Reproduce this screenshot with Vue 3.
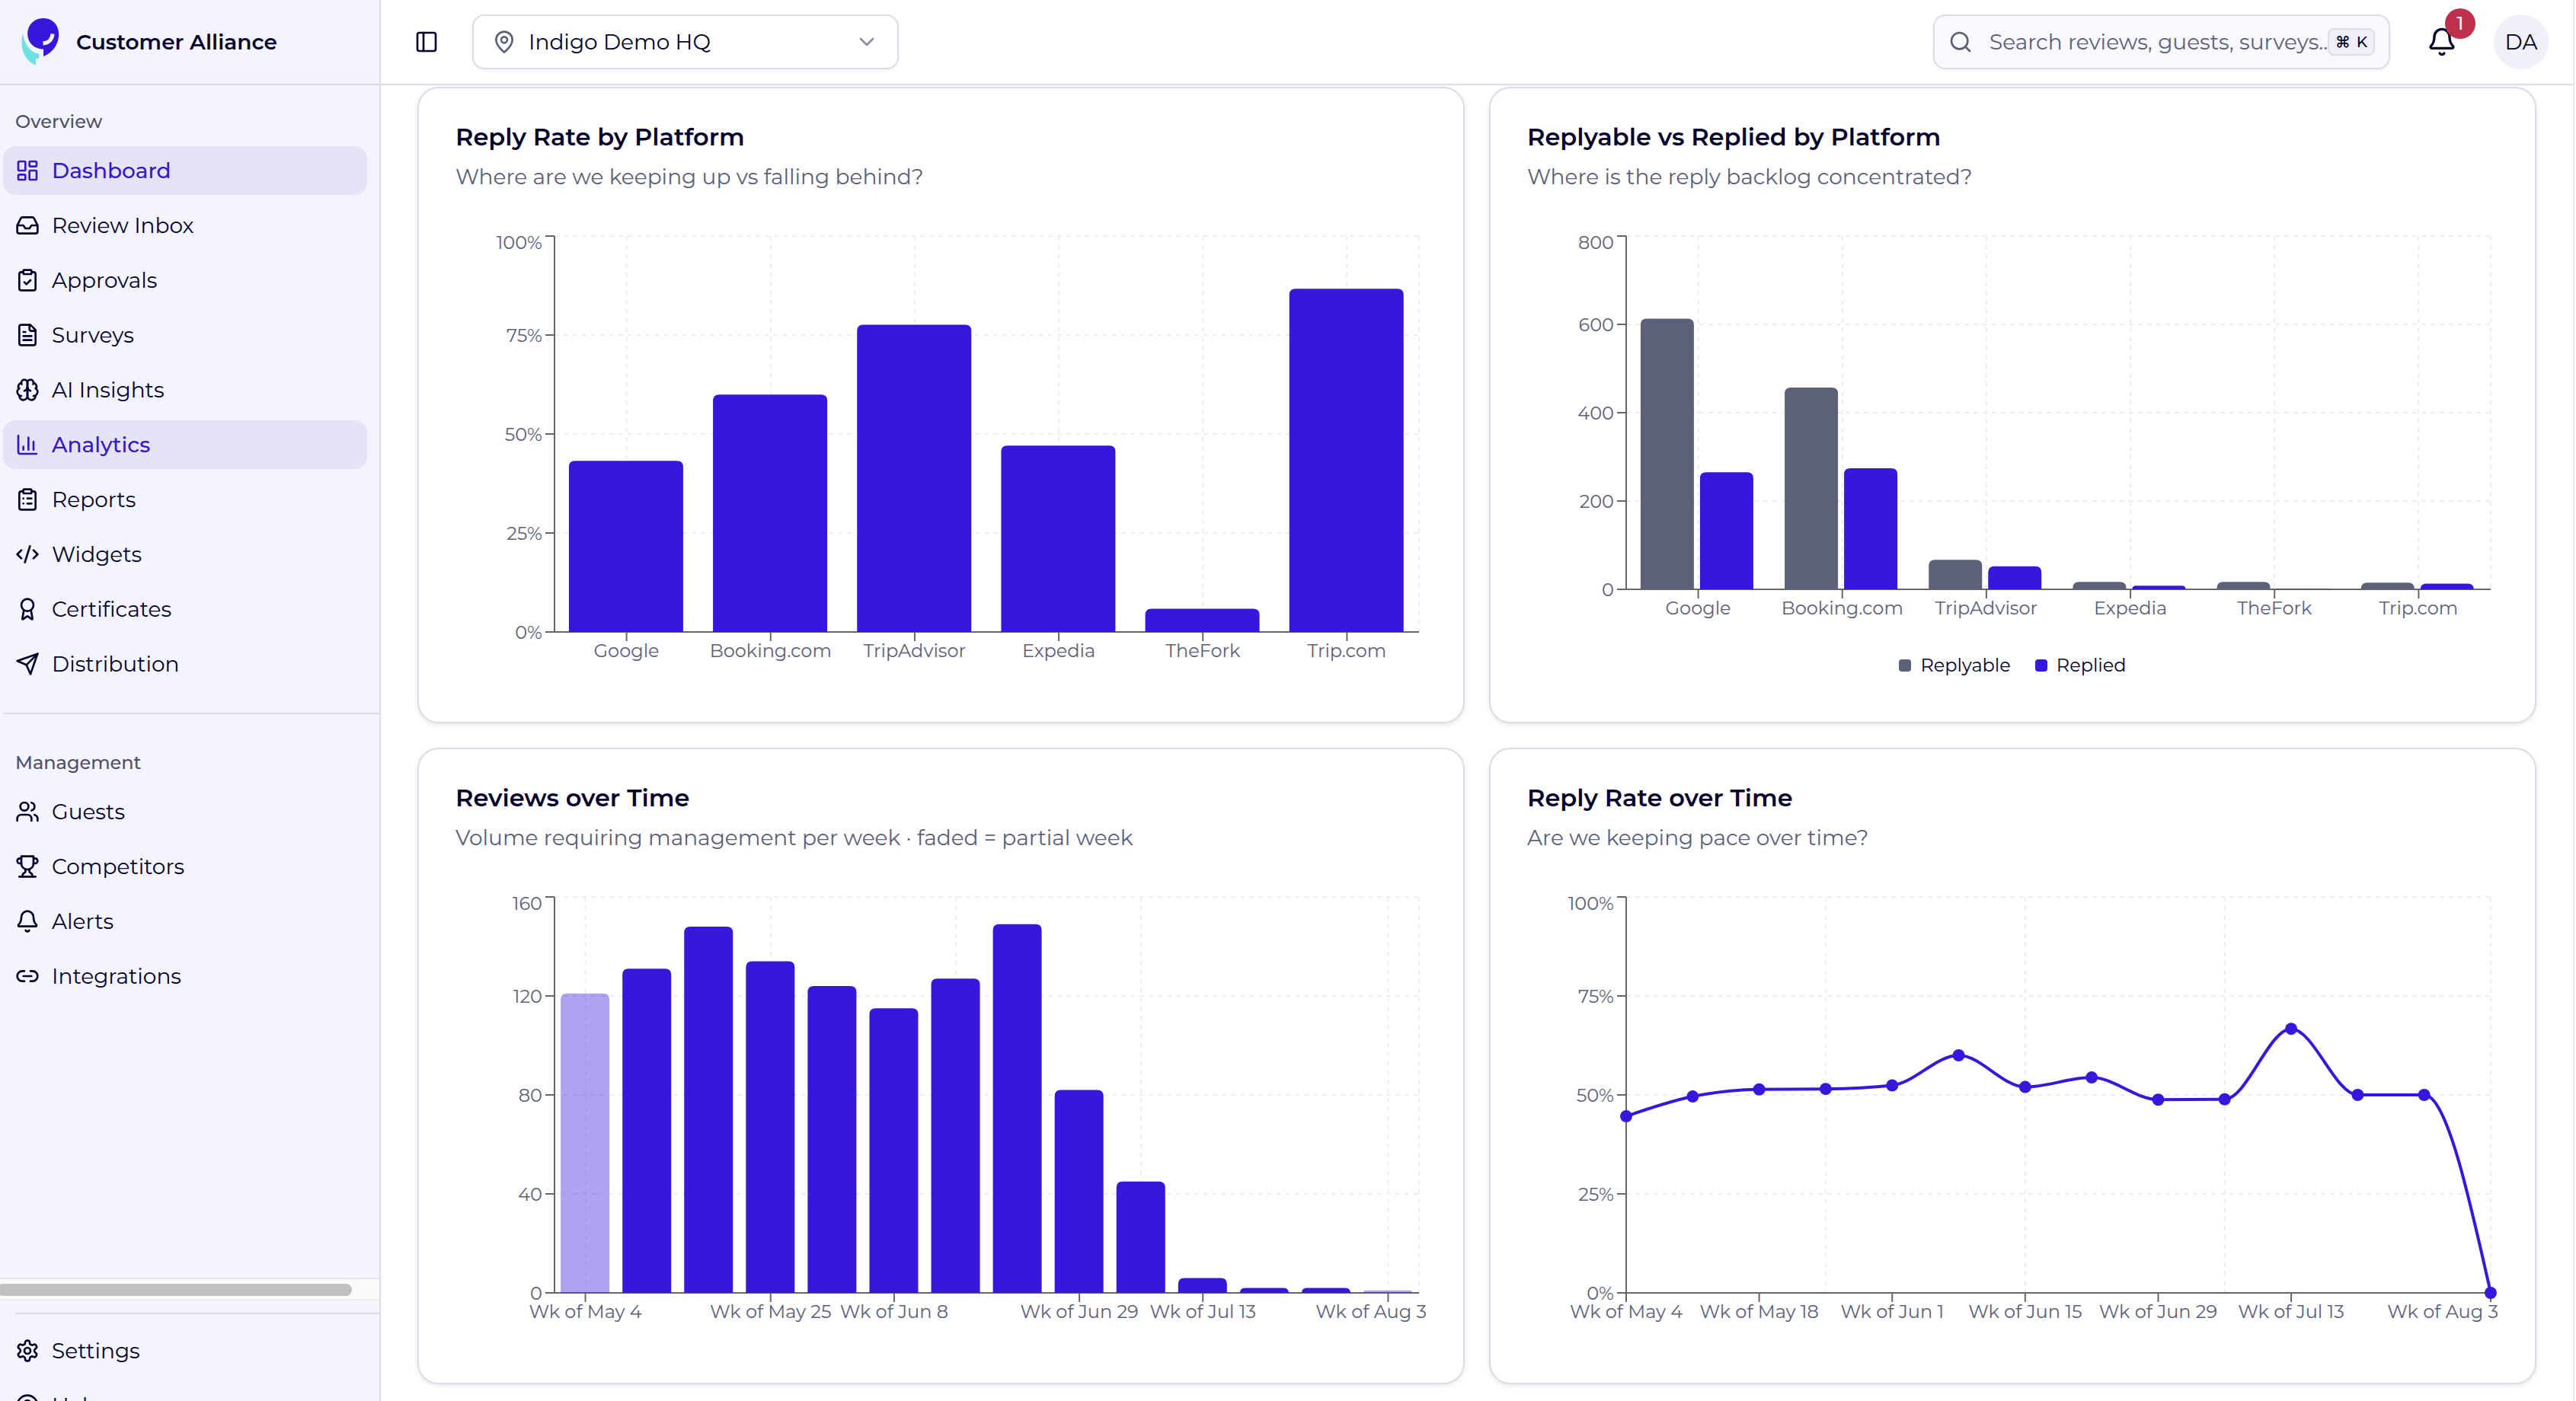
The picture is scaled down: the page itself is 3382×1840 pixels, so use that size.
<template>
    <div class="app">
        <!-- Sidebar -->
        <aside class="sidebar">
            <div class="brand">
                <svg class="brand-logo" viewBox="26 23 52 64" aria-hidden="true">
                    <path d="M30.500 44C25 58 30 79 47 86V77.500C49 77.500 50 76.500 51.500 76V71C41 69 31 58 30.500 44Z" fill="#70e0e0" />
                    <path d="M57 24C68.500 24 77.200 32.500 77.200 45C77.200 58 69 69.500 57 74V64.500C44 64.500 36.200 55 36.200 44.500C36.200 32.500 45 24 57 24Z" fill="#3618dc" />
                    <path d="M69 44.500C68.500 51.500 64 56.500 56.500 57" fill="none" stroke="#f4f4fe" stroke-width="5" />
                </svg>
                <span class="brand-name">Customer Alliance</span>
            </div>

            <nav class="nav">
                <div class="nav-label">Overview</div>
                <a v-for="item in overview" :key="item.label" href="#" class="nav-item" :class="{ active: item.active }">
                    <svg class="icon" viewBox="0 0 24 24" v-html="icons[item.icon]"></svg>
                    <span>{{ item.label }}</span>
                </a>
                <hr class="nav-separator">
                <div class="nav-label">Management</div>
                <a v-for="item in management" :key="item.label" href="#" class="nav-item">
                    <svg class="icon" viewBox="0 0 24 24" v-html="icons[item.icon]"></svg>
                    <span>{{ item.label }}</span>
                </a>
            </nav>

            <div class="scroll-track">
                <div class="scroll-thumb"></div>
            </div>

            <div class="sidebar-footer">
                <hr class="footer-separator">
                <a v-for="item in footer" :key="item.label" href="#" class="nav-item">
                    <svg class="icon" viewBox="0 0 24 24" v-html="icons[item.icon]"></svg>
                    <span>{{ item.label }}</span>
                </a>
            </div>
        </aside>

        <div class="content">
            <!-- Top bar -->
            <header class="topbar">
                <button class="icon-button" type="button" aria-label="Toggle sidebar">
                    <svg class="icon" viewBox="0 0 24 24" v-html="icons.panel"></svg>
                </button>
                <label class="location">
                    <svg class="icon muted" viewBox="0 0 24 24" v-html="icons.pin"></svg>
                    <select v-model="location" aria-label="Location">
                        <option>Indigo Demo HQ</option>
                    </select>
                    <svg class="icon chevron" viewBox="0 0 24 24" v-html="icons.chevron"></svg>
                </label>
                <div class="topbar-spacer"></div>
                <label class="search">
                    <svg class="icon muted" viewBox="0 0 24 24" v-html="icons.search"></svg>
                    <input v-model="query" type="text" placeholder="Search reviews, guests, surveys..." aria-label="Search">
                    <kbd><span>⌘</span><span>K</span></kbd>
                </label>
                <button class="bell" type="button" aria-label="Notifications">
                    <svg class="icon" viewBox="0 0 24 24" v-html="icons.bell"></svg>
                    <span class="badge">1</span>
                </button>
                <button class="avatar" type="button">DA</button>
            </header>

            <!-- Charts -->
            <main class="cards">
                <section v-for="(chart, index) in charts" :key="chart.title" class="card">
                    <h2>{{ chart.title }}</h2>
                    <p>{{ chart.subtitle }}</p>
                    <div :ref="index === 0 ? (el) => (plotEl = el) : undefined" class="plot">
                        <svg class="chart" :width="width" :height="chart.height" role="img" :aria-label="chart.title">
                            <g class="grid">
                                <line v-for="t in chart.yTicks" :key="'h' + t" :x1="LEFT" :x2="right" :y1="yPos(chart, t)" :y2="yPos(chart, t)" />
                                <line v-for="i in chart.gridAt" :key="'v' + i" :x1="xPos(chart, i)" :x2="xPos(chart, i)" :y1="TOP" :y2="bottom(chart)" />
                                <line :x1="right" :x2="right" :y1="TOP" :y2="bottom(chart)" />
                            </g>
                            <g class="axis">
                                <line :x1="LEFT" :x2="right" :y1="bottom(chart)" :y2="bottom(chart)" />
                                <line :x1="LEFT" :x2="LEFT" :y1="TOP" :y2="bottom(chart)" />
                                <line v-for="t in chart.yTicks" :key="'y' + t" :x1="LEFT - 12" :x2="LEFT" :y1="yPos(chart, t)" :y2="yPos(chart, t)" />
                                <line v-for="i in chart.ticksAt" :key="'x' + i" :x1="xPos(chart, i)" :x2="xPos(chart, i)" :y1="bottom(chart)" :y2="bottom(chart) + 12" />
                            </g>
                            <g class="tick-text">
                                <text v-for="t in chart.yTicks" :key="t" :x="LEFT - 16" :y="labelY(chart, t)" text-anchor="end">{{ t }}{{ chart.unit }}</text>
                                <text v-for="i in chart.ticksAt" :key="'l' + i" v-bind="labelX(chart, i)" :y="bottom(chart) + 33">{{ chart.labels[i] }}</text>
                            </g>
                            <template v-if="chart.type === 'bar'">
                                <path v-for="bar in bars(chart)" :key="bar.key" :d="bar.d" :fill="bar.color" :opacity="bar.opacity" />
                            </template>
                            <template v-else>
                                <path :d="linePath(chart)" class="line" />
                                <circle v-for="(p, i) in points(chart)" :key="i" :cx="p[0]" :cy="p[1]" r="8" :fill="BLUE" />
                            </template>
                        </svg>
                        <ul v-if="chart.legend" class="legend">
                            <li v-for="s in chart.series" :key="s.name">
                                <i :style="{ background: s.color }"></i>{{ s.name }}
                            </li>
                        </ul>
                    </div>
                </section>
            </main>
        </div>
        <div class="page-edge"></div>
    </div>
</template>

<script setup>
import { computed, onBeforeUnmount, onMounted, ref } from 'vue'

const BLUE = '#3618dc'
const SLATE = '#5d6079'
const TOP = 10
const LEFT = 130

const location = ref('Indigo Demo HQ')
const query = ref('')

const overview = [
    { label: 'Dashboard', icon: 'dashboard', active: true },
    { label: 'Review Inbox', icon: 'inbox' },
    { label: 'Approvals', icon: 'clipboardCheck' },
    { label: 'Surveys', icon: 'fileText' },
    { label: 'AI Insights', icon: 'brain' },
    { label: 'Analytics', icon: 'chart', active: true },
    { label: 'Reports', icon: 'clipboardList' },
    { label: 'Widgets', icon: 'code' },
    { label: 'Certificates', icon: 'award' },
    { label: 'Distribution', icon: 'send' }
]
const management = [
    { label: 'Guests', icon: 'users' },
    { label: 'Competitors', icon: 'trophy' },
    { label: 'Alerts', icon: 'bell' },
    { label: 'Integrations', icon: 'link' }
]
const footer = [
    { label: 'Settings', icon: 'settings' },
    { label: 'Help', icon: 'help' }
]

const icons = {
    dashboard: '<rect width="7" height="9" x="3" y="3" rx="1"/><rect width="7" height="5" x="14" y="3" rx="1"/><rect width="7" height="9" x="14" y="12" rx="1"/><rect width="7" height="5" x="3" y="16" rx="1"/>',
    inbox: '<polyline points="22 12 16 12 14 15 10 15 8 12 2 12"/><path d="M5.45 5.11 2 12v6a2 2 0 0 0 2 2h16a2 2 0 0 0 2-2v-6l-3.45-6.89A2 2 0 0 0 16.76 4H7.24a2 2 0 0 0-1.79 1.11z"/>',
    clipboardCheck: '<rect width="8" height="4" x="8" y="2" rx="1"/><path d="M16 4h2a2 2 0 0 1 2 2v14a2 2 0 0 1-2 2H6a2 2 0 0 1-2-2V6a2 2 0 0 1 2-2h2"/><path d="m9 14 2 2 4-4"/>',
    fileText: '<path d="M15 2H6a2 2 0 0 0-2 2v16a2 2 0 0 0 2 2h12a2 2 0 0 0 2-2V7Z"/><path d="M14 2v4a2 2 0 0 0 2 2h4"/><path d="M10 9H8"/><path d="M16 13H8"/><path d="M16 17H8"/>',
    brain: '<path d="M12 5a3 3 0 1 0-5.997.125 4 4 0 0 0-2.526 5.77 4 4 0 0 0 .556 6.588A4 4 0 1 0 12 18Z"/><path d="M12 5a3 3 0 1 1 5.997.125 4 4 0 0 1 2.526 5.77 4 4 0 0 1-.556 6.588A4 4 0 1 1 12 18Z"/><path d="M15 13a4.5 4.5 0 0 1-3-4 4.500 4.500 0 0 1-3 4"/><path d="M17.599 6.500a3 3 0 0 0 .399-1.375"/><path d="M6.003 5.125A3 3 0 0 0 6.401 6.500"/><path d="M3.477 10.896a4 4 0 0 1 .585-.396"/><path d="M19.938 10.500a4 4 0 0 1 .585.396"/><path d="M6 18a4 4 0 0 1-1.967-.516"/><path d="M19.967 17.484A4 4 0 0 1 18 18"/>',
    chart: '<path d="M3 3v16a2 2 0 0 0 2 2h16"/><path d="M18 17V9"/><path d="M13 17V5"/><path d="M8 17v-3"/>',
    clipboardList: '<rect width="8" height="4" x="8" y="2" rx="1"/><path d="M16 4h2a2 2 0 0 1 2 2v14a2 2 0 0 1-2 2H6a2 2 0 0 1-2-2V6a2 2 0 0 1 2-2h2"/><path d="M12 11h4"/><path d="M12 16h4"/><path d="M8 11h.01"/><path d="M8 16h.01"/>',
    code: '<path d="m18 16 4-4-4-4"/><path d="m6 8-4 4 4 4"/><path d="m14.500 4-5 16"/>',
    award: '<path d="m15.477 12.890 1.515 8.526a.5.5 0 0 1-.81.470l-3.580-2.687a1 1 0 0 0-1.197 0l-3.586 2.686a.5.5 0 0 1-.81-.469l1.514-8.526"/><circle cx="12" cy="8" r="6"/>',
    send: '<path d="M22 2 11 13"/><path d="M22 2 15 22 11 13 2 9Z"/>',
    users: '<path d="M16 21v-2a4 4 0 0 0-4-4H6a4 4 0 0 0-4 4v2"/><circle cx="9" cy="7" r="4"/><path d="M22 21v-2a4 4 0 0 0-3-3.870"/><path d="M16 3.130a4 4 0 0 1 0 7.750"/>',
    trophy: '<path d="M6 9H4.500a2.500 2.500 0 0 1 0-5H6"/><path d="M18 9h1.500a2.500 2.500 0 0 0 0-5H18"/><path d="M4 22h16"/><path d="M10 14.660V17c0 .55-.47.98-.97 1.210C7.850 18.750 7 20.240 7 22"/><path d="M14 14.660V17c0 .55.47.98.97 1.210C16.150 18.750 17 20.240 17 22"/><path d="M18 2H6v7a6 6 0 0 0 12 0V2Z"/>',
    bell: '<path d="M10.268 21a2 2 0 0 0 3.464 0"/><path d="M3.262 15.326A1 1 0 0 0 4 17h16a1 1 0 0 0 .740-1.673C19.410 13.956 18 12.499 18 8A6 6 0 0 0 6 8c0 4.499-1.411 5.956-2.738 7.326"/>',
    link: '<path d="M9 17H7A5 5 0 0 1 7 7h2"/><path d="M15 7h2a5 5 0 1 1 0 10h-2"/><path d="M8 12h8"/>',
    settings: '<path d="M12.220 2h-.44a2 2 0 0 0-2 2v.18a2 2 0 0 1-1 1.730l-.43.250a2 2 0 0 1-2 0l-.15-.08a2 2 0 0 0-2.730.730l-.22.380a2 2 0 0 0 .730 2.730l.15.100a2 2 0 0 1 1 1.720v.510a2 2 0 0 1-1 1.740l-.15.090a2 2 0 0 0-.730 2.730l.22.380a2 2 0 0 0 2.730.730l.15-.08a2 2 0 0 1 2 0l.43.250a2 2 0 0 1 1 1.730V20a2 2 0 0 0 2 2h.44a2 2 0 0 0 2-2v-.18a2 2 0 0 1 1-1.730l.43-.25a2 2 0 0 1 2 0l.15.080a2 2 0 0 0 2.730-.730l.22-.390a2 2 0 0 0-.730-2.730l-.15-.08a2 2 0 0 1-1-1.740v-.5a2 2 0 0 1 1-1.740l.15-.09a2 2 0 0 0 .730-2.730l-.22-.38a2 2 0 0 0-2.730-.730l-.15.080a2 2 0 0 1-2 0l-.43-.25a2 2 0 0 1-1-1.730V4a2 2 0 0 0-2-2z"/><circle cx="12" cy="12" r="3"/>',
    help: '<circle cx="12" cy="12" r="10"/><path d="M9.090 9a3 3 0 0 1 5.830 1c0 2-3 3-3 3"/><path d="M12 17h.01"/>',
    panel: '<rect width="18" height="18" x="3" y="3" rx="2"/><path d="M9 3v18"/>',
    pin: '<path d="M20 10c0 4.993-5.539 10.193-7.399 11.799a1 1 0 0 1-1.202 0C9.539 20.193 4 14.993 4 10a8 8 0 0 1 16 0"/><circle cx="12" cy="10" r="3"/>',
    chevron: '<path d="m6 9 6 6 6-6"/>',
    search: '<circle cx="11" cy="11" r="8"/><path d="m21 21-4.300-4.300"/>'
}

const platforms = ['Google', 'Booking.com', 'TripAdvisor', 'Expedia', 'TheFork', 'Trip.com']
const replyable = [613, 457, 67, 17, 17, 15]
const replied = [265, 274, 52, 8, 1, 13]
const weeks = ['May 4', 'May 11', 'May 18', 'May 25', 'Jun 1', 'Jun 8', 'Jun 15', 'Jun 22', 'Jun 29', 'Jul 6', 'Jul 13', 'Jul 20', 'Jul 27', 'Aug 3'].map((w) => 'Wk of ' + w)
const allPlatforms = [0, 1, 2, 3, 4, 5]

const charts = [
    {
        title: 'Reply Rate by Platform',
        subtitle: 'Where are we keeping up vs falling behind?',
        type: 'bar',
        height: 600,
        max: 100,
        unit: '%',
        yTicks: [0, 25, 50, 75, 100],
        labels: platforms,
        ticksAt: allPlatforms,
        gridAt: allPlatforms,
        series: [{ name: 'Reply rate', color: BLUE, values: replied.map((n, i) => (n / replyable[i]) * 100) }]
    },
    {
        title: 'Replyable vs Replied by Platform',
        subtitle: 'Where is the reply backlog concentrated?',
        type: 'bar',
        height: 544,
        max: 800,
        unit: '',
        yTicks: [0, 200, 400, 600, 800],
        labels: platforms,
        ticksAt: allPlatforms,
        gridAt: allPlatforms,
        legend: true,
        series: [
            { name: 'Replyable', color: SLATE, values: replyable },
            { name: 'Replied', color: BLUE, values: replied }
        ]
    },
    {
        title: 'Reviews over Time',
        subtitle: 'Volume requiring management per week · faded = partial week',
        type: 'bar',
        height: 600,
        max: 160,
        unit: '',
        yTicks: [0, 40, 80, 120, 160],
        labels: weeks,
        ticksAt: [0, 3, 5, 8, 10, 13],
        gridAt: [0, 3, 6, 9, 13],
        faded: [0, 13],
        series: [{ name: 'Reviews', color: BLUE, values: [121, 131, 148, 134, 124, 115, 127, 149, 82, 45, 6, 2, 2, 1] }]
    },
    {
        title: 'Reply Rate over Time',
        subtitle: 'Are we keeping pace over time?',
        type: 'line',
        height: 600,
        max: 100,
        unit: '%',
        yTicks: [0, 25, 50, 75, 100],
        labels: weeks,
        ticksAt: [0, 2, 4, 6, 8, 10, 13],
        gridAt: [3, 6, 9],
        series: [{ name: 'Reply rate', color: BLUE, values: [44.6, 49.6, 51.4, 51.5, 52.4, 60, 52, 54.4, 48.8, 48.9, 66.7, 50, 50, 0] }]
    }
]

// every card has the same width, so one plot is measured for all of them
let plotEl = null
let observer = null
const width = ref(1275)
const right = computed(() => width.value - 10)

onMounted(() => {
    width.value = plotEl.clientWidth
    observer = new ResizeObserver(() => {
        width.value = plotEl.clientWidth
    })
    observer.observe(plotEl)
})
onBeforeUnmount(() => observer.disconnect())

// 60px under the plot for the labels, 10px margin
const bottom = (chart) => chart.height - 70
const yPos = (chart, v) => bottom(chart) - (v / chart.max) * (bottom(chart) - TOP)
const xPos = (chart, i) => {
    const plot = right.value - LEFT
    if (chart.type === 'line') return LEFT + (plot / (chart.labels.length - 1)) * i
    return LEFT + (plot / chart.labels.length) * (i + 0.5)
}

// the top label and the last week stay inside the drawing area
const labelY = (chart, t) => yPos(chart, t) + (t === chart.max ? 17 : 9)
const labelX = (chart, i) => {
    if (chart.labels === weeks && i === weeks.length - 1) {
        return { x: width.value, 'text-anchor': 'end' }
    }
    return { x: xPos(chart, i), 'text-anchor': 'middle' }
}

const bars = (chart) => {
    const band = (right.value - LEFT) / chart.labels.length
    const count = chart.series.length
    const gap = 8
    const size = Math.floor((band * 0.8 - gap * (count - 1)) / count / 2) * 2
    return chart.series.flatMap((s, n) =>
        s.values.map((v, i) => {
            const x = LEFT + band * i + band * 0.1 + n * (size + gap)
            const y = yPos(chart, v)
            const base = bottom(chart)
            const r = Math.min(8, base - y)
            return {
                key: n + '-' + i,
                color: s.color,
                opacity: chart.faded && chart.faded.includes(i) ? 0.4 : 1,
                d: `M${x},${base}V${y + r}Q${x},${y} ${x + r},${y}H${x + size - r}Q${x + size},${y} ${x + size},${y + r}V${base}Z`
            }
        })
    )
}

const points = (chart) => chart.series[0].values.map((v, i) => [xPos(chart, i), yPos(chart, v)])

// monotone cubic interpolation
const linePath = (chart) => {
    const p = points(chart)
    const slopes = p.slice(1).map((q, i) => (q[1] - p[i][1]) / (q[0] - p[i][0]))
    const m = p.map((_, i) => {
        if (i === 0 || i === p.length - 1) return 0
        const a = slopes[i - 1]
        const b = slopes[i]
        return (Math.sign(a) + Math.sign(b)) * Math.min(Math.abs(a), Math.abs(b), Math.abs(a + b) / 4)
    })
    m[0] = (3 * slopes[0] - m[1]) / 2
    m[p.length - 1] = (3 * slopes[p.length - 2] - m[p.length - 2]) / 2
    let d = `M${p[0][0]},${p[0][1]}`
    for (let i = 1; i < p.length; i++) {
        const dx = (p[i][0] - p[i - 1][0]) / 3
        d += `C${p[i - 1][0] + dx},${p[i - 1][1] + dx * m[i - 1]} ${p[i][0] - dx},${p[i][1] - dx * m[i]} ${p[i][0]},${p[i][1]}`
    }
    return d
}
</script>

<style>
body {
    margin: 0;
    overflow: hidden;
}
</style>

<style scoped>
* {
    box-sizing: border-box;
}
.app {
    display: flex;
    height: 100vh;
    overflow: hidden;
    background: #ffffff;
    color: #05022b;
    font-family: "Montserrat", "Inter", "Liberation Sans", sans-serif;
    font-size: 28px;
    line-height: 40px;
}
button,
select,
input,
kbd {
    font: inherit;
    color: inherit;
}
button {
    border: none;
    padding: 0;
    background: none;
    cursor: pointer;
}
.icon {
    width: 32px;
    height: 32px;
    flex-shrink: 0;
    fill: none;
    stroke: currentColor;
    stroke-width: 2;
    stroke-linecap: round;
    stroke-linejoin: round;
}
.icon.muted {
    color: #5d6079;
}

/* sidebar */
.sidebar {
    width: 500px;
    flex-shrink: 0;
    display: flex;
    flex-direction: column;
    overflow: hidden;
    background: #f4f4fe;
    border-right: 2px solid #dcdce6;
}
.brand {
    height: 112px;
    flex-shrink: 0;
    display: flex;
    align-items: center;
    gap: 22px;
    padding-left: 26px;
    border-bottom: 2px solid #dcdce6;
}
.brand-logo {
    width: 52px;
    height: 64px;
}
.brand-name {
    font-weight: 600;
}
.nav {
    flex: 1;
    min-height: 0;
    overflow: hidden;
    display: flex;
    flex-direction: column;
    gap: 8px;
    padding: 16px 0 0 4px;
}
.nav-label {
    height: 56px;
    flex-shrink: 0;
    padding: 12px 16px;
    font-size: 24px;
    line-height: 40px;
    font-weight: 500;
    color: #504e6b;
}
.nav-item {
    height: 64px;
    flex-shrink: 0;
    display: flex;
    align-items: center;
    gap: 16px;
    margin-right: 16px;
    padding: 0 16px;
    border-radius: 16px;
    color: inherit;
    text-decoration: none;
}
.nav-item.active {
    background: #e5e4f6;
    color: #3618c8;
    font-weight: 500;
}
.nav-separator {
    flex-shrink: 0;
    width: 100%;
    margin: 24px 0;
    border: none;
    border-top: 2px solid #dcdce6;
}
.scroll-track {
    height: 30px;
    flex-shrink: 0;
    padding: 6px 0;
    background: #fafafa;
    border-top: 2px solid #e8e8ea;
    border-bottom: 2px solid #ededed;
}
.scroll-thumb {
    width: 466px;
    height: 16px;
    margin-left: -4px;
    border-radius: 8px;
    background: #c1c1c1;
}
.sidebar-footer {
    height: 132px;
    flex-shrink: 0;
    display: flex;
    flex-direction: column;
    gap: 8px;
    padding: 16px 0 0 4px;
    overflow: hidden;
}
.footer-separator {
    flex-shrink: 0;
    margin: 0 0 8px 16px;
    border: none;
    border-top: 2px solid #dcdce6;
}

/* top bar */
.content {
    flex: 1;
    min-width: 0;
    display: flex;
    flex-direction: column;
}
.page-edge {
    width: 4px;
    flex-shrink: 0;
    background: #fafafa;
    border-left: 2px solid #e8e8e8;
}
.topbar {
    height: 112px;
    flex-shrink: 0;
    display: flex;
    align-items: center;
    padding: 0 32px 0 44px;
    border-bottom: 2px solid #dcdce6;
}
.icon-button {
    display: flex;
    margin-right: 44px;
}
.location,
.search {
    height: 72px;
    display: flex;
    align-items: center;
    border: 2px solid #dcdce6;
    border-radius: 16px;
    box-shadow: 0 2px 4px rgba(0, 0, 0, 0.05);
}
.location {
    width: 560px;
    gap: 16px;
    padding: 0 24px;
}
.location select {
    flex: 1;
    min-width: 0;
    padding: 0;
    appearance: none;
    border: none;
    outline: none;
    background: none;
}
.chevron {
    color: #5d6079;
    opacity: 0.7;
}
.topbar-spacer {
    flex: 1;
}
.search {
    width: 600px;
    padding: 0 18px;
    background: #f8f8fd;
}
.search input {
    flex: 1;
    min-width: 0;
    margin-left: 22px;
    padding: 0;
    border: none;
    outline: none;
    background: none;
}
.search input::placeholder {
    color: #5d6079;
    opacity: 1;
}
kbd {
    width: 62px;
    height: 36px;
    flex-shrink: 0;
    display: flex;
    align-items: center;
    justify-content: center;
    gap: 8px;
    border: 2px solid #dcdce6;
    border-radius: 8px;
    background: #f0f0f9;
    font-size: 20px;
    line-height: 32px;
    font-weight: 500;
}
.bell {
    position: relative;
    display: flex;
    margin: 0 48px;
}
.bell .icon {
    width: 40px;
    height: 40px;
}
.badge {
    position: absolute;
    top: -24px;
    right: -24px;
    width: 40px;
    height: 40px;
    border-radius: 50%;
    background: #be314c;
    color: #ffffff;
    font-size: 24px;
    font-weight: 500;
    text-align: center;
}
.avatar {
    width: 72px;
    height: 72px;
    border-radius: 50%;
    background: #f0f0f9;
}

/* cards */
.cards {
    flex: 1;
    min-height: 0;
    overflow: hidden;
    display: grid;
    grid-template-columns: repeat(2, minmax(0, 1fr));
    align-content: start;
    gap: 32px;
    padding: 2px 48px 0;
}
.card {
    padding: 48px;
    border: 2px solid #dcdce6;
    border-radius: 28px;
    background: #ffffff;
    box-shadow: 0 2px 6px rgba(0, 0, 0, 0.1);
}
.card h2 {
    margin: 0;
    font-size: 32px;
    line-height: 32px;
    font-weight: 600;
}
.card p {
    margin: 16px 0 48px;
    color: #5d6079;
}
.plot {
    height: 600px;
}
.chart {
    display: block;
    overflow: visible;
}
.grid line {
    stroke: #ededf2;
    stroke-width: 2;
    stroke-dasharray: 6 6;
}
.axis line {
    stroke: #666666;
    stroke-width: 2;
}
.tick-text text {
    fill: #5d6079;
    font-size: 24px;
}
.line {
    fill: none;
    stroke: #3618dc;
    stroke-width: 4;
}
.legend {
    display: flex;
    justify-content: center;
    gap: 32px;
    margin: 0;
    padding: 10px 0 0;
    list-style: none;
    font-size: 24px;
}
.legend li {
    display: flex;
    align-items: center;
    gap: 12px;
}
.legend i {
    width: 16px;
    height: 16px;
    border-radius: 4px;
}
</style>
